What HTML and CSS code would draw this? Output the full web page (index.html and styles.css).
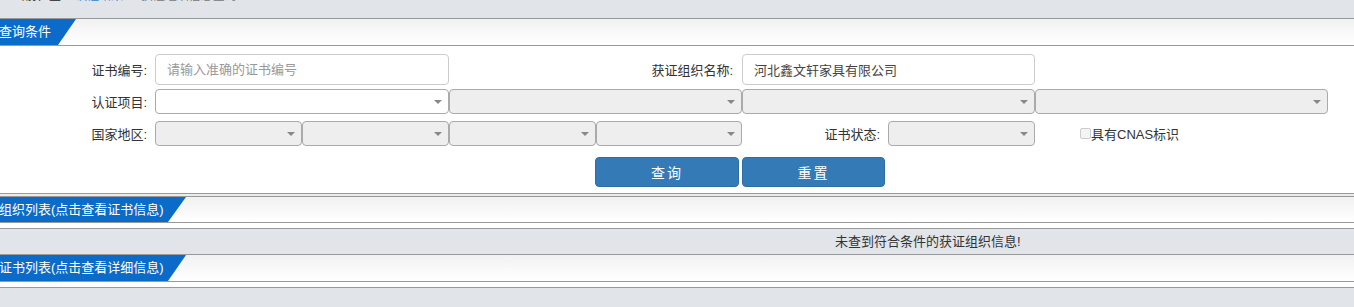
FILE: index.html
```
<!DOCTYPE html>
<html>
  <head>
    <meta charset="utf-8">
    <title>获证组织查询</title>
    <link rel="stylesheet" href="styles.css">
  </head>
  <body>
    <!-- Breadcrumb, mostly scrolled out of view -->
    <div class="crumb">
      <div class="crumb-text">
        <span class="here">当前位置：</span><span class="link">认证结果</span><span class="cur"> &gt; 获证组织信息查询</span>
      </div>
    </div>

    <!-- Search panel -->
    <div class="bar">
      <span class="tab tab-s">查询条件</span>
    </div>
    <div class="form">
      <div class="row row-1">
        <label class="lbl">证书编号:</label>
        <input class="txt" type="text" placeholder="请输入准确的证书编号">
        <label class="lbl lbl-2">获证组织名称:</label>
        <input class="txt" type="text" value="河北鑫文轩家具有限公司">
      </div>
      <div class="row row-2">
        <label class="lbl">认证项目:</label>
        <span class="sel"></span>
        <span class="sel off"></span>
        <span class="sel off"></span>
        <span class="sel off"></span>
      </div>
      <div class="row row-3">
        <label class="lbl">国家地区:</label>
        <div class="pair">
          <span class="sel off"></span>
          <span class="sel off"></span>
        </div>
        <div class="pair">
          <span class="sel off"></span>
          <span class="sel off"></span>
        </div>
        <div class="status">
          <label class="lbl-in">证书状态:</label>
          <span class="sel off"></span>
        </div>
        <div class="cnas">
          <span class="box"></span>具有CNAS标识
        </div>
      </div>
      <div class="row row-4">
        <span></span>
        <div class="btns">
          <button class="btn">查询</button>
          <button class="btn btn-2">重置</button>
        </div>
      </div>
    </div>

    <div class="gap"></div>

    <!-- Organisation list -->
    <div class="bar bar-2">
      <span class="tab tab-l">组织列表(点击查看证书信息)</span>
    </div>
    <div class="spacer"></div>
    <div class="result">
      <span class="empty">未查到符合条件的获证组织信息!</span>
    </div>

    <!-- Certificate list -->
    <div class="bar">
      <span class="tab tab-l">证书列表(点击查看详细信息)</span>
    </div>
    <div class="spacer"></div>
    <div class="result result-last"></div>
  </body>
</html>
```

FILE: styles.css
```
body {
  margin: 0;
  background: #e1e5e9;
  font-family: "Liberation Sans", "Noto Sans CJK SC", sans-serif;
  font-size: 13px;
  color: #333;
  overflow: hidden;
}

/* breadcrumb strip */
.crumb {
  height: 18px;
  overflow: hidden;
}
.crumb-text {
  margin-top: -12px;
  padding-left: 13px;
  font-size: 12px;
  line-height: 16px;
  white-space: nowrap;
}
.crumb .here { color: #222; }
.crumb .link { color: #2a7fd4; margin-left: 2px; }
.crumb .cur  { color: #777; margin-left: 4px; }

/* panel headers */
.bar {
  height: 26px;
  border-top: 1px solid #999;
  border-bottom: 1px solid #999;
  background: linear-gradient(#f1f1f1, #ffffff);
}
.bar-2 { height: 25px; }
.tab {
  display: block;
  height: 100%;
  background: #0b6bc9;
  color: #fff;
  font-size: 13px;
  line-height: 26px;
  white-space: nowrap;
  text-indent: -1px;
  clip-path: polygon(0 0, 100% 0, calc(100% - 18px) 100%, 0 100%);
}
.bar-2 .tab { line-height: 25px; }
.tab-s { width: 76px; }
.tab-l { width: 186px; }

/* search form */
.form {
  background: #fff;
  padding: 8px 0 6px;
  border-bottom: 1px solid #999;
}
.row {
  display: grid;
  grid-template-columns: 155px 294px 293px 293px 293px;
  align-items: center;
}
.row-1 { height: 31px; }
.row-2 { height: 25px; margin-top: 4px; }
.row-3 { height: 25px; margin-top: 7px; }
.row-4 { height: 30px; margin-top: 11px; }

.lbl {
  text-align: right;
  padding-right: 8px;
  white-space: nowrap;
}
.lbl-2 { padding-right: 9px; }

.txt {
  box-sizing: border-box;
  height: 31px;
  width: 100%;
  margin: 0;
  padding: 0 11px;
  border: 1px solid #ccc;
  border-radius: 4px;
  font: inherit;
  font-size: 13px;
  color: #444;
  outline: none;
}
.txt::placeholder { color: #999; }

.sel {
  position: relative;
  display: block;
  box-sizing: border-box;
  height: 25px;
  border: 1px solid #aaa;
  border-radius: 4px;
  background: #fff;
}
.sel.off { background: #eee; }
.sel::after {
  content: "";
  position: absolute;
  right: 6px;
  top: 10px;
  border-style: solid;
  border-width: 4px 4px 0 4px;
  border-color: #888 transparent transparent transparent;
}

.pair {
  display: grid;
  grid-template-columns: 1fr 1fr;
}
.status {
  display: flex;
  align-items: center;
}
.lbl-in {
  flex: 1;
  text-align: right;
  padding-right: 8px;
}
.status .sel { width: 147px; }

.cnas {
  display: flex;
  align-items: center;
  padding-left: 45px;
}
.box {
  box-sizing: border-box;
  width: 11px;
  height: 11px;
  border: 1px solid #ccc;
  border-radius: 2px;
  background: #f4f4f4;
}

.btns {
  grid-column: 2 / 6;
  display: flex;
  gap: 3px;
  padding-left: 440px;
}
.btn {
  width: 144px;
  height: 30px;
  border: 1px solid #2e6da4;
  border-radius: 4px;
  background: #337ab7;
  color: #fff;
  font-family: inherit;
  font-size: 14px;
  letter-spacing: 2px;
  padding: 0;
}
.btn-2 { width: 143px; }

.gap {
  height: 2px;
  background: #ebebeb;
}

/* list areas */
.spacer {
  height: 5px;
  background: #fff;
}
.result {
  height: 25px;
  border-top: 1px solid #999;
  line-height: 25px;
}
.result-last { height: 30px; }
.empty { padding-left: 835px; }
```
